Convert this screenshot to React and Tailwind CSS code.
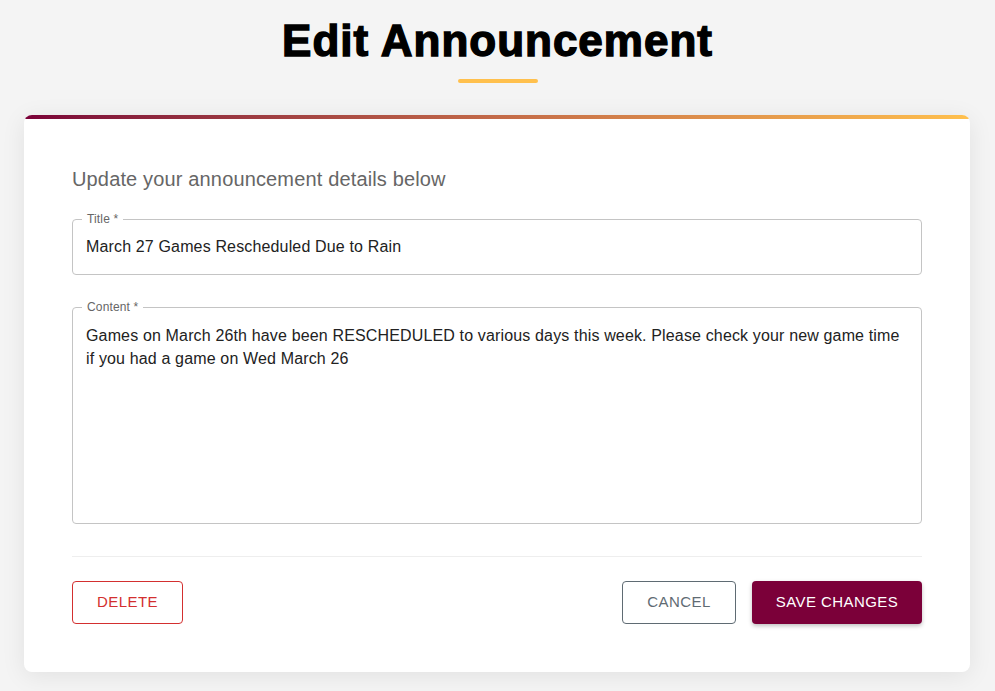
import React from 'react';

const OutlinedField = ({ label, children, className = '' }) => (
  <div className={`relative rounded border border-[#c4c4c4] ${className}`}>
    <span className="absolute -top-[8px] left-[9px] bg-white px-[5px] text-[12px] leading-[14px] tracking-[0.15px] text-[#666]">
      {label}
    </span>
    {children}
  </div>
);

export default function App() {
  return (
    <div className="min-h-screen bg-[#f4f4f4] font-['Liberation_Sans',Arial,sans-serif]">
      {/* Header */}
      <div className="flex flex-col items-center pt-[17px]">
        <h1 className="text-[44px] leading-[48px] font-bold tracking-[1px] text-black [-webkit-text-stroke:1.4px_black]">
          Edit Announcement
        </h1>
        <div className="mt-[14px] h-[4px] w-[80px] rounded-full bg-[#ffc04d]" />
      </div>

      {/* Card */}
      <div className="ml-[24px] mt-[32px] w-[946px] overflow-hidden rounded-lg bg-white shadow-[0_4px_24px_rgba(0,0,0,0.08)]">
        <div className="h-[4px] bg-gradient-to-r from-[#7a0038] via-[#c36a48] to-[#ffc04d]" />

        <div className="px-[48px] pt-[48px] pb-[48px]">
          <p className="text-[20px] leading-[24px] tracking-[0.15px] text-[#666]">
            Update your announcement details below
          </p>

          <OutlinedField label="Title *" className="mt-[28px] flex h-[56px] items-center px-[13px]">
            <span className="text-[16px] tracking-[0.15px] text-[#222]">March 27 Games Rescheduled Due to Rain</span>
          </OutlinedField>

          <OutlinedField label="Content *" className="mt-[32px] h-[217px] px-[13px] pt-[16px]">
            <p className="text-[16px] leading-[23px] tracking-[0.15px] text-[#222]">
              Games on March 26th have been RESCHEDULED to various days this week. Please check your new game time
              if you had a game on Wed March 26
            </p>
          </OutlinedField>

          <div className="mt-[32px] border-t border-[#eeeeee]" />

          <div className="mt-[24px] flex items-center justify-between">
            <button className="h-[43px] w-[111px] rounded border border-[#d32f2f] text-[15px] tracking-[0.43px] text-[#d32f2f]">
              DELETE
            </button>
            <div className="flex items-center gap-[16px]">
              <button className="h-[43px] w-[114px] rounded border border-[#5f6b73] text-[15px] tracking-[0.43px] text-[#5f6b73]">
                CANCEL
              </button>
              <button className="h-[43px] w-[170px] rounded bg-[#7b0039] text-[15px] tracking-[0.43px] text-white shadow-[0_2px_4px_rgba(0,0,0,0.25)]">
                SAVE CHANGES
              </button>
            </div>
          </div>
        </div>
      </div>
    </div>
  );
}
